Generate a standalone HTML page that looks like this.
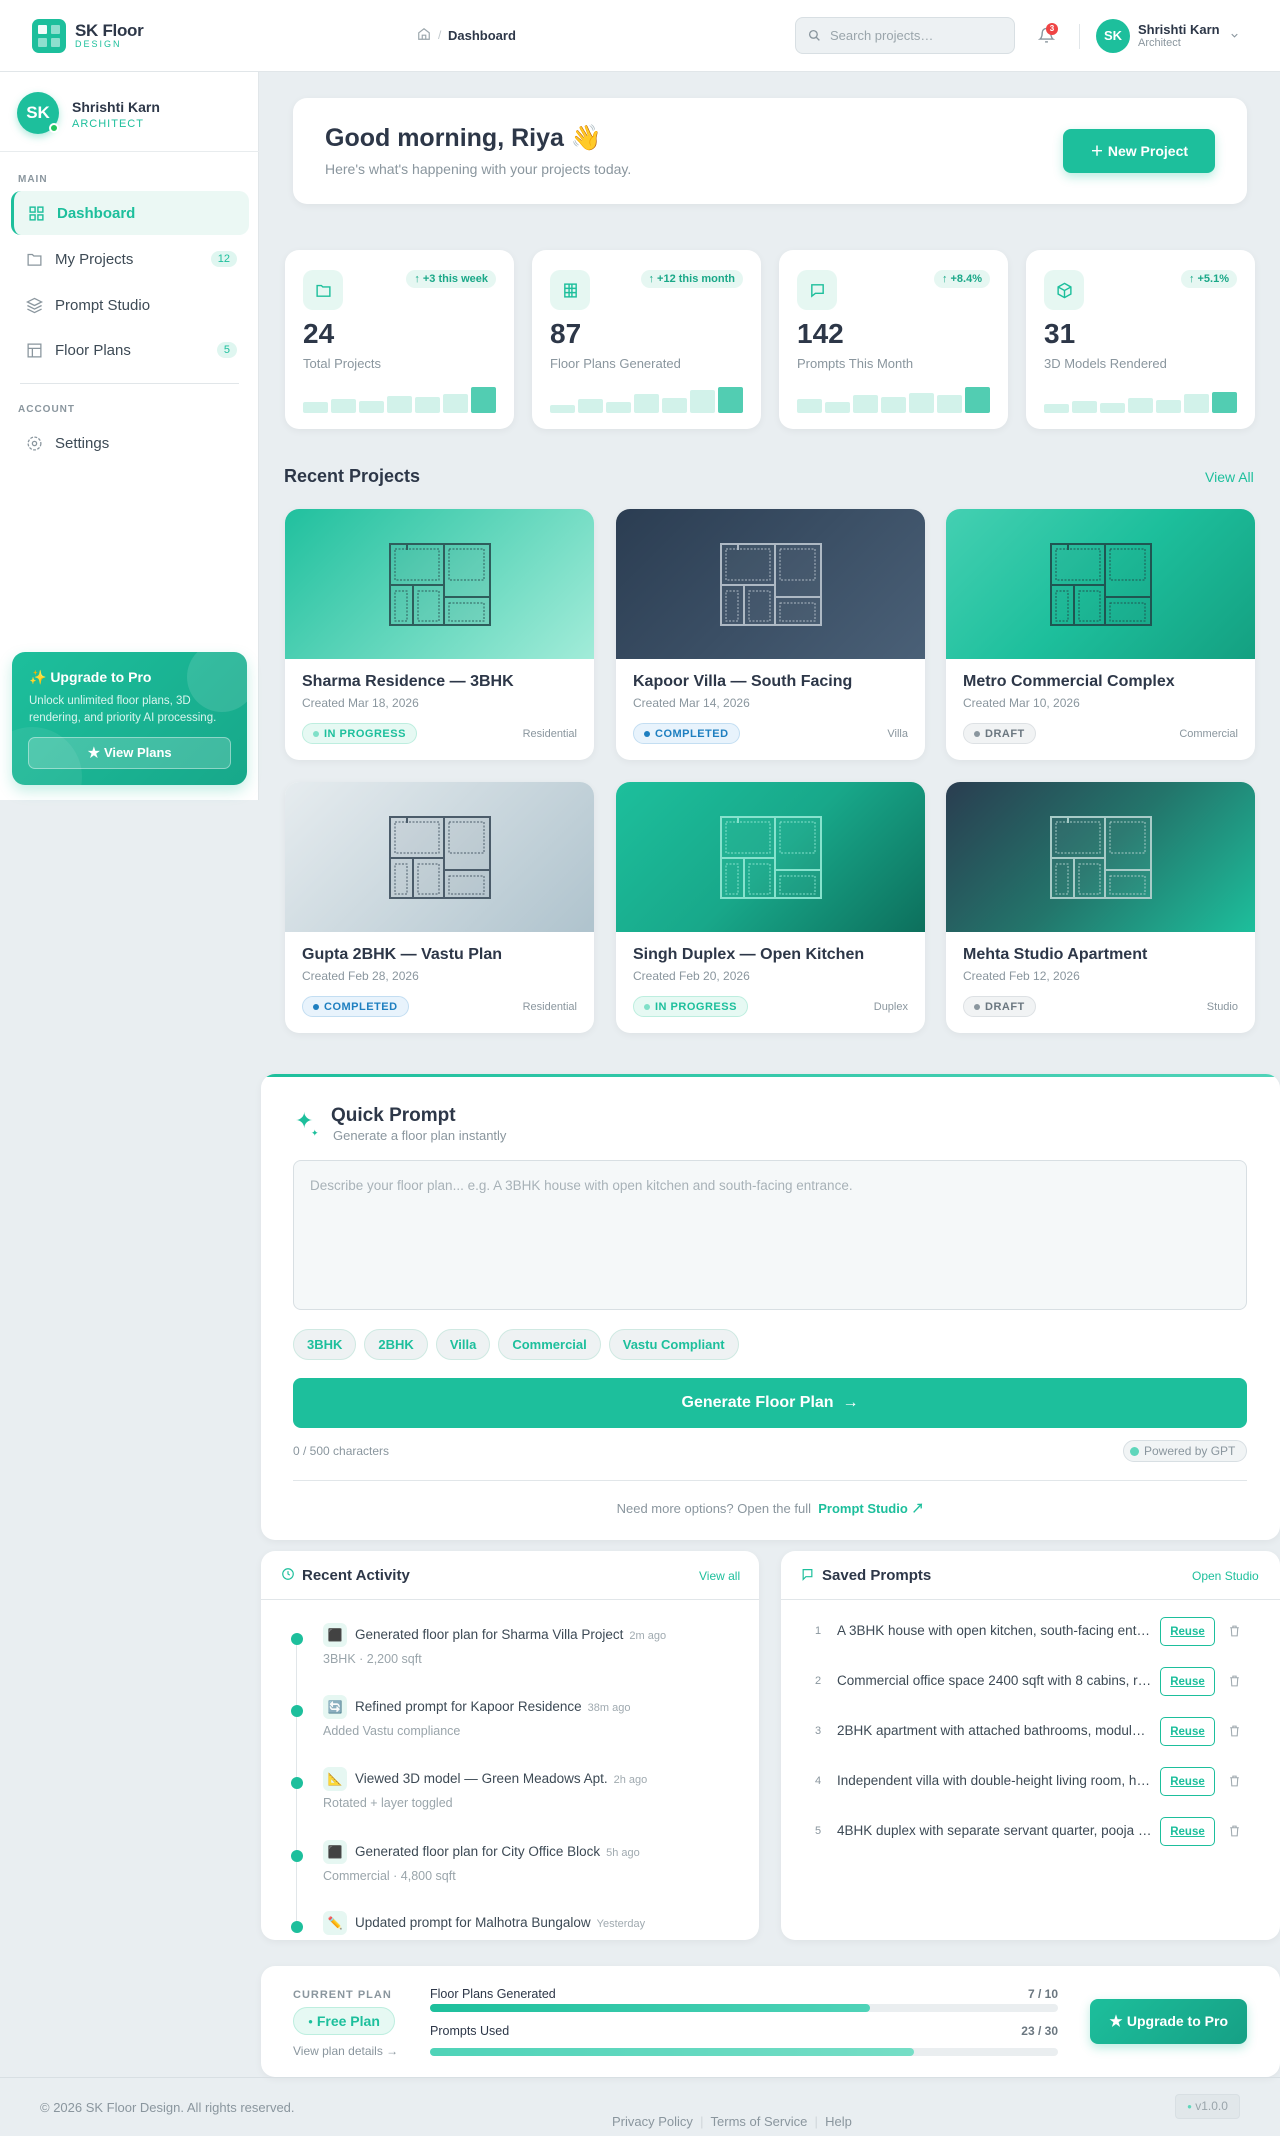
<!DOCTYPE html>
<html><head><meta charset="utf-8"><style>
*{box-sizing:border-box;margin:0;padding:0}
body{width:1280px;height:2136px;background:#e9eef1;font-family:"Liberation Sans","Noto Sans CJK JP",sans-serif;color:#2d3748;position:relative;overflow:hidden}
.a{position:absolute}
.card{position:absolute;background:#fff;border-radius:14px;box-shadow:0 2px 8px rgba(0,0,0,.05)}
.teal{color:#1dbf9c}
.muted{color:#8a969e}
.ni{position:absolute;left:11px;width:238px;height:44px;display:flex;align-items:center;padding-left:15px;font-size:15px;color:#3d4a55;border-radius:10px}
.ni svg{margin-right:12px}
.badge{position:absolute;right:12px;background:#dff6f0;color:#1dbf9c;font-size:11px;border-radius:10px;padding:2px 7px}
.stat{position:absolute;top:250px;width:229px;height:179px;background:#fff;border-radius:14px;box-shadow:0 2px 8px rgba(0,0,0,.05)}
.stat .ic{position:absolute;left:18px;top:20px;width:40px;height:40px;border-radius:10px;background:#e6f7f2;display:flex;align-items:center;justify-content:center}
.stat .tg{position:absolute;right:18px;top:20px;background:#e6f7f2;color:#1aa888;font-size:11px;font-weight:bold;border-radius:10px;padding:3px 8px}
.stat .n{position:absolute;left:18px;top:68px;font-size:28px;font-weight:bold;color:#2d3748}
.stat .l{position:absolute;left:18px;top:106px;font-size:13px;color:#8a969e}
.bars{position:absolute;left:18px;right:18px;bottom:16px;height:26px;display:flex;align-items:flex-end;gap:3px}
.bars i{flex:1;background:#d2f2ea;border-radius:2px}
.bars i:last-child{background:#52cdb2}
.pc{position:absolute;width:309px;height:251px;background:#fff;border-radius:14px;overflow:hidden;box-shadow:0 2px 8px rgba(0,0,0,.05)}
.pc .img{height:150px;display:flex;align-items:center;justify-content:center}
.pc h3{position:absolute;left:17px;top:164px;font-size:16px;font-weight:bold;color:#2d3748}
.pc .d{position:absolute;left:17px;top:187px;font-size:12px;color:#8a969e}
.pc .st{position:absolute;left:17px;top:214px;height:21px;border-radius:11px;font-size:11px;font-weight:bold;padding:0 10px;display:flex;align-items:center;letter-spacing:.5px}
.pc .st b{width:6px;height:6px;border-radius:3px;margin-right:5px;display:inline-block}
.pc .ty{position:absolute;right:17px;top:219px;font-size:11px;color:#8a969e}
.ip{background:#e6f9f3;color:#1dbf9c;border:1px solid #bdeedf}.ip b{background:#7fe0c8}
.cp{background:#e8f3fc;color:#1e7fc0;border:1px solid #c3def2}.cp b{background:#1e7fc0}
.dr{background:#f1f3f4;color:#6b7780;border:1px solid #dde1e4}.dr b{background:#8a969e}
.chip{height:31px;border-radius:16px;background:#eef2f3;border:1px solid #cfe9e2;color:#1dbf9c;font-size:13px;font-weight:bold;padding:0 13px;display:flex;align-items:center}
.act{position:absolute;left:0;width:497px}
.act .dot{position:absolute;left:30px;width:12px;height:12px;border-radius:6px;background:#1dbf9c}
.act .ib{position:absolute;left:62px;width:24px;height:24px;border-radius:6px;background:#e6f7f2;font-size:12px;display:flex;align-items:center;justify-content:center}
.act .t{position:absolute;left:94px;font-size:13.5px;color:#3d4a55;white-space:nowrap}
.act .t span{font-size:11px;color:#a0aab0;margin-left:6px}
.act .s{position:absolute;left:62px;font-size:12.5px;color:#9aa5ab}
.sp{position:absolute;left:0;width:499px;height:30px}
.sp .k{position:absolute;left:34px;top:8px;font-size:11px;color:#8a969e}
.sp .t{position:absolute;left:56px;top:6px;font-size:13.5px;color:#3d4a55;width:315px;white-space:nowrap;overflow:hidden;text-overflow:ellipsis}
.sp .r{position:absolute;left:379px;top:0;width:55px;height:29px;border:1.5px solid #1dbf9c;border-radius:5px;color:#1dbf9c;font-size:11.5px;font-weight:bold;text-decoration:underline;display:flex;align-items:center;justify-content:center}
.sp .x{position:absolute;left:447px;top:7px}
</style></head><body>

<div class="a" style="left:0;top:0;width:1280px;height:72px;background:#fff;border-bottom:1px solid #e1e6e9"></div>
<div class="a" style="left:32px;top:19px;width:34px;height:34px;border-radius:7px;background:#1dbf9c">
<div class="a" style="left:6px;top:6px;width:9px;height:9px;background:#fff;opacity:.95;border-radius:1px"></div>
<div class="a" style="left:19px;top:6px;width:9px;height:9px;background:#fff;opacity:.5;border-radius:1px"></div>
<div class="a" style="left:6px;top:19px;width:9px;height:9px;background:#fff;opacity:.5;border-radius:1px"></div>
<div class="a" style="left:19px;top:19px;width:9px;height:9px;background:#fff;opacity:.5;border-radius:1px"></div></div>
<div class="a" style="left:75px;top:21px;font-size:17px;font-weight:bold;color:#2d3748;letter-spacing:-.3px">SK Floor</div>
<div class="a teal" style="left:75px;top:39px;font-size:9px;letter-spacing:2px">DESIGN</div>
<svg class="a" style="left:417px;top:27px" width="14" height="14" viewBox="0 0 24 24" fill="none" stroke="#9aa5ab" stroke-width="2"><path d="M3 10l9-7 9 7v11H3z"/><path d="M9 21v-7h6v7"/></svg>
<div class="a" style="left:438px;top:28px;font-size:12px;color:#c0c8cc">/</div>
<div class="a" style="left:448px;top:28px;font-size:13px;font-weight:bold;color:#2d3748">Dashboard</div>
<div class="a" style="left:795px;top:17px;width:220px;height:37px;border-radius:8px;background:#edf1f3;border:1px solid #d8dfe3"></div>
<svg class="a" style="left:808px;top:29px" width="13" height="13" viewBox="0 0 24 24" fill="none" stroke="#8a969e" stroke-width="2.5"><circle cx="10" cy="10" r="7"/><path d="M15 15l6 6"/></svg>
<div class="a" style="left:830px;top:28px;font-size:13px;color:#9aa5ab">Search projects…</div>
<svg class="a" style="left:1038px;top:27px" width="17" height="17" viewBox="0 0 24 24" fill="none" stroke="#8a969e" stroke-width="2"><path d="M6 8a6 6 0 0112 0c0 7 3 9 3 9H3s3-2 3-9"/><path d="M10 21h4"/></svg>
<div class="a" style="left:1046px;top:23px;width:12px;height:12px;border-radius:6px;background:#ef4444;color:#fff;font-size:8px;text-align:center;line-height:12px;font-weight:bold">3</div>
<div class="a" style="left:1079px;top:24px;width:1px;height:25px;background:#e1e6e9"></div>
<div class="a" style="left:1096px;top:19px;width:34px;height:34px;border-radius:17px;background:#1dbf9c;color:#fff;font-size:13px;font-weight:bold;text-align:center;line-height:34px">SK</div>
<div class="a" style="left:1138px;top:22px;font-size:13px;font-weight:bold;color:#2d3748">Shrishti Karn</div>
<div class="a" style="left:1138px;top:37px;font-size:11px;color:#8a969e">Architect</div>
<svg class="a" style="left:1229px;top:30px" width="11" height="11" viewBox="0 0 24 24" fill="none" stroke="#8a969e" stroke-width="2.5"><path d="M6 9l6 6 6-6"/></svg>

<div class="a" style="left:0;top:72px;width:259px;height:728px;background:#fff;border-right:1px solid #e1e6e9"></div>
<div class="a" style="left:17px;top:92px;width:42px;height:42px;border-radius:21px;background:#1dbf9c;color:#fff;font-size:17px;font-weight:bold;text-align:center;line-height:42px;box-shadow:0 3px 8px rgba(29,191,156,.35)">SK</div>
<div class="a" style="left:49px;top:123px;width:10px;height:10px;border-radius:5px;background:#22c55e;border:2px solid #fff"></div>
<div class="a" style="left:72px;top:99px;font-size:14px;font-weight:bold;color:#2d3748">Shrishti Karn</div>
<div class="a teal" style="left:72px;top:118px;font-size:11px;letter-spacing:1px">ARCHITECT</div>
<div class="a" style="left:0;top:151px;width:259px;height:1px;background:#e8ecee"></div>
<div class="a" style="left:18px;top:174px;font-size:10px;font-weight:bold;color:#8a969e;letter-spacing:1px">MAIN</div>
<div class="ni" style="top:191px;background:#ebf8f4;color:#1dbf9c;font-weight:bold;border-left:3px solid #1dbf9c;padding-left:14px"><svg width="17" height="17" viewBox="0 0 24 24" fill="none" stroke="#1dbf9c" stroke-width="2"><rect x="3" y="3" width="7" height="7"/><rect x="14" y="3" width="7" height="7"/><rect x="3" y="14" width="7" height="7"/><rect x="14" y="14" width="7" height="7"/></svg>Dashboard</div>
<div class="ni" style="top:237px"><svg width="17" height="17" viewBox="0 0 24 24" fill="none" stroke="#8a969e" stroke-width="1.8"><path d="M3 5h6l2 2h10v13H3z"/></svg>My Projects<span class="badge">12</span></div>
<div class="ni" style="top:283px"><svg width="17" height="17" viewBox="0 0 24 24" fill="none" stroke="#8a969e" stroke-width="1.8"><path d="M12 2l10 5-10 5L2 7z"/><path d="M2 12l10 5 10-5"/><path d="M2 17l10 5 10-5"/></svg>Prompt Studio</div>
<div class="ni" style="top:328px"><svg width="17" height="17" viewBox="0 0 24 24" fill="none" stroke="#8a969e" stroke-width="1.8"><rect x="3" y="3" width="18" height="18"/><path d="M3 9h18M9 9v12"/></svg>Floor Plans<span class="badge">5</span></div>
<div class="a" style="left:20px;top:383px;width:219px;height:1px;background:#e1e6e9"></div>
<div class="a" style="left:18px;top:404px;font-size:10px;font-weight:bold;color:#8a969e;letter-spacing:1px">ACCOUNT</div>
<div class="ni" style="top:421px"><svg width="17" height="17" viewBox="0 0 24 24" fill="none" stroke="#8a969e" stroke-width="1.8"><circle cx="12" cy="12" r="3"/><circle cx="12" cy="12" r="9" stroke-dasharray="4 2"/></svg>Settings</div>
<div class="a" style="left:12px;top:652px;width:235px;height:133px;border-radius:13px;background:linear-gradient(135deg,#1dbf9c,#17a88a);overflow:hidden;box-shadow:0 6px 14px rgba(29,191,156,.25)">
<div class="a" style="left:175px;top:-10px;width:70px;height:70px;border-radius:35px;background:rgba(255,255,255,.12)"></div>
<div class="a" style="left:-30px;top:75px;width:100px;height:100px;border-radius:50px;background:rgba(255,255,255,.07)"></div>
<div class="a" style="left:17px;top:17px;font-size:14px;font-weight:bold;color:#fff">✨ Upgrade to Pro</div>
<div class="a" style="left:17px;top:41px;width:210px;font-size:11.5px;line-height:17px;color:#d8f5ee">Unlock unlimited floor plans, 3D rendering, and priority AI processing.</div>
<div class="a" style="left:16px;top:85px;width:203px;height:32px;border-radius:7px;border:1px solid rgba(255,255,255,.4);background:rgba(255,255,255,.18);color:#fff;font-size:13px;font-weight:bold;text-align:center;line-height:30px">★ View Plans</div></div>

<div class="card" style="left:293px;top:98px;width:954px;height:106px;overflow:hidden">
<div class="a" style="left:32px;top:26px;font-size:25px;font-weight:bold;color:#2d3748">Good morning, Riya 👋</div>
<div class="a" style="left:32px;top:63px;font-size:14px;color:#8a969e">Here's what's happening with your projects today.</div>
<div class="a" style="left:770px;top:31px;width:152px;height:44px;border-radius:8px;background:#1dbf9c;color:#fff;font-size:14px;font-weight:bold;text-align:center;line-height:44px;box-shadow:0 4px 10px rgba(29,191,156,.3)">＋ New Project</div></div>

<div class="stat" style="left:285px"><div class="ic"><svg width="17" height="17" viewBox="0 0 24 24" fill="none" stroke="#1dbf9c" stroke-width="2"><path d="M3 5h6l2 2h10v13H3z"/></svg></div><div class="tg">↑ +3 this week</div><div class="n">24</div><div class="l">Total Projects</div><div class="bars"><i style="height:42%"></i><i style="height:55%"></i><i style="height:48%"></i><i style="height:66%"></i><i style="height:62%"></i><i style="height:75%"></i><i style="height:100%"></i></div></div>
<div class="stat" style="left:532px"><div class="ic"><svg width="17" height="17" viewBox="0 0 24 24" fill="none" stroke="#1dbf9c" stroke-width="2"><rect x="4" y="3" width="16" height="18"/><path d="M4 9h16M4 15h16M10 3v18M14 3v18"/></svg></div><div class="tg">↑ +12 this month</div><div class="n">87</div><div class="l">Floor Plans Generated</div><div class="bars"><i style="height:30%"></i><i style="height:55%"></i><i style="height:42%"></i><i style="height:75%"></i><i style="height:58%"></i><i style="height:88%"></i><i style="height:100%"></i></div></div>
<div class="stat" style="left:779px"><div class="ic"><svg width="17" height="17" viewBox="0 0 24 24" fill="none" stroke="#1dbf9c" stroke-width="2"><path d="M4 4h16v12H9l-5 4z"/></svg></div><div class="tg">↑ +8.4%</div><div class="n">142</div><div class="l">Prompts This Month</div><div class="bars"><i style="height:55%"></i><i style="height:42%"></i><i style="height:68%"></i><i style="height:60%"></i><i style="height:78%"></i><i style="height:70%"></i><i style="height:100%"></i></div></div>
<div class="stat" style="left:1026px"><div class="ic"><svg width="17" height="17" viewBox="0 0 24 24" fill="none" stroke="#1dbf9c" stroke-width="2"><path d="M12 2l9 5v10l-9 5-9-5V7z"/><path d="M3 7l9 5 9-5M12 12v10"/></svg></div><div class="tg">↑ +5.1%</div><div class="n">31</div><div class="l">3D Models Rendered</div><div class="bars"><i style="height:35%"></i><i style="height:45%"></i><i style="height:40%"></i><i style="height:58%"></i><i style="height:50%"></i><i style="height:72%"></i><i style="height:82%"></i></div></div>

<div class="a" style="left:284px;top:466px;font-size:18px;font-weight:bold;color:#2d3748">Recent Projects</div>
<div class="a teal" style="left:1205px;top:469px;font-size:14px">View All</div>

<svg width="0" height="0" style="position:absolute"><defs><g id="fp"><rect x="1" y="1" width="100" height="81" fill="currentColor" fill-opacity=".08"/><rect x="1" y="1" width="100" height="81"/><path d="M55 1v81M1 42h54M55 54h46M24 42v40"/><path d="M18 1v6"/><g stroke-dasharray="2 1.5" stroke-width="1"><rect x="6" y="6" width="44" height="31"/><rect x="60" y="6" width="35" height="31"/><rect x="6" y="48" width="12" height="30"/><rect x="29" y="48" width="21" height="30"/><rect x="60" y="60" width="35" height="18"/></g></g></defs></svg>

<div class="pc" style="left:285px;top:509px"><div class="img" style="background:linear-gradient(135deg,#20c09e,#a2ecd9)"><svg width="104" height="85" viewBox="-1 -1 104 85" fill="none" stroke="#2e5e5c" stroke-width="2" style="color:#2e5e5c"><use href="#fp"/></svg></div><h3>Sharma Residence — 3BHK</h3><div class="d">Created Mar 18, 2026</div><div class="st ip"><b></b>IN PROGRESS</div><div class="ty">Residential</div></div>
<div class="pc" style="left:616px;top:509px"><div class="img" style="background:linear-gradient(135deg,#2b3d52,#4a6077)"><svg width="104" height="85" viewBox="-1 -1 104 85" fill="none" stroke="#aeb9c4" stroke-width="2" style="color:#aeb9c4"><use href="#fp"/></svg></div><h3>Kapoor Villa — South Facing</h3><div class="d">Created Mar 14, 2026</div><div class="st cp"><b></b>COMPLETED</div><div class="ty">Villa</div></div>
<div class="pc" style="left:946px;top:509px"><div class="img" style="background:linear-gradient(135deg,#44d0b2,#1dbf9c 50%,#14a081)"><svg width="104" height="85" viewBox="-1 -1 104 85" fill="none" stroke="#1f5652" stroke-width="2" style="color:#1f5652"><use href="#fp"/></svg></div><h3>Metro Commercial Complex</h3><div class="d">Created Mar 10, 2026</div><div class="st dr"><b></b>DRAFT</div><div class="ty">Commercial</div></div>
<div class="pc" style="left:285px;top:782px"><div class="img" style="background:linear-gradient(135deg,#e6ecef,#afc3cd)"><svg width="104" height="85" viewBox="-1 -1 104 85" fill="none" stroke="#4b5c6a" stroke-width="2" style="color:#4b5c6a"><use href="#fp"/></svg></div><h3>Gupta 2BHK — Vastu Plan</h3><div class="d">Created Feb 28, 2026</div><div class="st cp"><b></b>COMPLETED</div><div class="ty">Residential</div></div>
<div class="pc" style="left:616px;top:782px"><div class="img" style="background:linear-gradient(135deg,#1dbf9c,#18a88a 50%,#0d6f5c)"><svg width="104" height="85" viewBox="-1 -1 104 85" fill="none" stroke="#86e2cd" stroke-width="2" style="color:#86e2cd"><use href="#fp"/></svg></div><h3>Singh Duplex — Open Kitchen</h3><div class="d">Created Feb 20, 2026</div><div class="st ip"><b></b>IN PROGRESS</div><div class="ty">Duplex</div></div>
<div class="pc" style="left:946px;top:782px"><div class="img" style="background:linear-gradient(135deg,#2a3d50,#23756b 50%,#1dbf9c)"><svg width="104" height="85" viewBox="-1 -1 104 85" fill="none" stroke="#a7cbc7" stroke-width="2" style="color:#a7cbc7"><use href="#fp"/></svg></div><h3>Mehta Studio Apartment</h3><div class="d">Created Feb 12, 2026</div><div class="st dr"><b></b>DRAFT</div><div class="ty">Studio</div></div>

<div class="card" style="left:261px;top:1074px;width:1019px;height:466px;overflow:hidden">
<div class="a" style="left:0;top:0;width:100%;height:3px;background:linear-gradient(90deg,#1dbf9c,#4fd3b8)"></div>
<div class="a teal" style="left:34px;top:36px;font-size:22px;line-height:22px">✦</div>
<div class="a teal" style="left:50px;top:54px;font-size:9px">✦</div>
<div class="a" style="left:70px;top:31px;font-size:19px;font-weight:bold;color:#2d3748">Quick Prompt</div>
<div class="a" style="left:72px;top:54px;font-size:13px;color:#8a969e">Generate a floor plan instantly</div>
<div class="a" style="left:32px;top:86px;width:954px;height:150px;border:1px solid #d8dfe3;border-radius:8px;background:#f5f8f9"></div>
<div class="a" style="left:49px;top:104px;font-size:13.5px;color:#a8b2b8">Describe your floor plan... e.g. A 3BHK house with open kitchen and south-facing entrance.</div>
<div class="a" style="left:32px;top:255px;display:flex;gap:8px"><div class="chip">3BHK</div><div class="chip">2BHK</div><div class="chip">Villa</div><div class="chip">Commercial</div><div class="chip">Vastu Compliant</div></div>
<div class="a" style="left:32px;top:304px;width:954px;height:50px;border-radius:8px;background:#1dbf9c;color:#fff;font-size:16px;font-weight:bold;text-align:center;line-height:50px">Generate Floor Plan &nbsp;→</div>
<div class="a" style="left:32px;top:370px;font-size:12px;color:#8a969e">0 / 500 characters</div>
<div class="a" style="left:862px;top:366px;width:124px;height:22px;border-radius:11px;border:1px solid #d8dfe3;background:#f1f4f5;font-size:12px;color:#8a969e;line-height:20px;padding-left:20px">Powered by GPT</div>
<div class="a" style="left:869px;top:373px;width:9px;height:9px;border-radius:5px;background:#5fd6bb"></div>
<div class="a" style="left:32px;top:406px;width:954px;height:1px;background:#e1e6e9"></div>
<div class="a" style="left:0;width:100%;top:424px;text-align:center;font-size:13px;color:#8a969e">Need more options? Open the full &nbsp;<b class="teal">Prompt Studio ↗</b></div></div>

<div class="card" style="left:261px;top:1551px;width:498px;height:389px;overflow:hidden">
<div class="a" style="left:0;top:48px;width:100%;height:1px;background:#e1e6e9"></div>
<svg class="a" style="left:20px;top:16px" width="14" height="14" viewBox="0 0 24 24" fill="none" stroke="#1dbf9c" stroke-width="2"><circle cx="12" cy="12" r="9"/><path d="M12 7v5l3 2"/></svg>
<div class="a" style="left:41px;top:16px;font-size:15px;font-weight:bold;color:#2d3748">Recent Activity</div>
<div class="a teal" style="left:438px;top:18px;font-size:12px">View all</div>
<div class="a" style="left:35px;top:90px;width:1px;height:290px;background:#e1e6e9"></div>
<div class="act" style="top:72px"><div class="dot" style="top:10px"></div><div class="ib">⬛</div><div class="t" style="top:4px">Generated floor plan for Sharma Villa Project<span>2m ago</span></div><div class="s" style="top:29px">3BHK · 2,200 sqft</div></div>
<div class="act" style="top:144px"><div class="dot" style="top:10px"></div><div class="ib">🔄</div><div class="t" style="top:4px">Refined prompt for Kapoor Residence<span>38m ago</span></div><div class="s" style="top:29px">Added Vastu compliance</div></div>
<div class="act" style="top:216px"><div class="dot" style="top:10px"></div><div class="ib">📐</div><div class="t" style="top:4px">Viewed 3D model — Green Meadows Apt.<span>2h ago</span></div><div class="s" style="top:29px">Rotated + layer toggled</div></div>
<div class="act" style="top:289px"><div class="dot" style="top:10px"></div><div class="ib">⬛</div><div class="t" style="top:4px">Generated floor plan for City Office Block<span>5h ago</span></div><div class="s" style="top:29px">Commercial · 4,800 sqft</div></div>
<div class="act" style="top:360px"><div class="dot" style="top:10px"></div><div class="ib">✏️</div><div class="t" style="top:4px">Updated prompt for Malhotra Bungalow<span>Yesterday</span></div><div class="s" style="top:29px">Switched to west-facing entry</div></div></div>

<div class="card" style="left:781px;top:1551px;width:499px;height:389px;overflow:hidden">
<div class="a" style="left:0;top:48px;width:100%;height:1px;background:#e1e6e9"></div>
<svg class="a" style="left:20px;top:17px" width="13" height="13" viewBox="0 0 24 24" fill="none" stroke="#1dbf9c" stroke-width="2.2"><path d="M4 3h16v13H9l-5 5z"/></svg>
<div class="a" style="left:41px;top:16px;font-size:15px;font-weight:bold;color:#2d3748">Saved Prompts</div>
<div class="a teal" style="left:411px;top:18px;font-size:12px">Open Studio</div>
<div class="sp" style="top:66px"><div class="k">1</div><div class="t">A 3BHK house with open kitchen, south-facing entrance and balcony</div><div class="r">Reuse</div><svg class="x" width="13" height="14" viewBox="0 0 24 24" fill="none" stroke="#a0aab0" stroke-width="2"><path d="M4 6h16M9 6V3h6v3M6 6l1 15h10l1-15"/></svg></div>
<div class="sp" style="top:116px"><div class="k">2</div><div class="t">Commercial office space 2400 sqft with 8 cabins, reception area</div><div class="r">Reuse</div><svg class="x" width="13" height="14" viewBox="0 0 24 24" fill="none" stroke="#a0aab0" stroke-width="2"><path d="M4 6h16M9 6V3h6v3M6 6l1 15h10l1-15"/></svg></div>
<div class="sp" style="top:166px"><div class="k">3</div><div class="t">2BHK apartment with attached bathrooms, modular kitchen</div><div class="r">Reuse</div><svg class="x" width="13" height="14" viewBox="0 0 24 24" fill="none" stroke="#a0aab0" stroke-width="2"><path d="M4 6h16M9 6V3h6v3M6 6l1 15h10l1-15"/></svg></div>
<div class="sp" style="top:216px"><div class="k">4</div><div class="t">Independent villa with double-height living room, home theater</div><div class="r">Reuse</div><svg class="x" width="13" height="14" viewBox="0 0 24 24" fill="none" stroke="#a0aab0" stroke-width="2"><path d="M4 6h16M9 6V3h6v3M6 6l1 15h10l1-15"/></svg></div>
<div class="sp" style="top:266px"><div class="k">5</div><div class="t">4BHK duplex with separate servant quarter, pooja room</div><div class="r">Reuse</div><svg class="x" width="13" height="14" viewBox="0 0 24 24" fill="none" stroke="#a0aab0" stroke-width="2"><path d="M4 6h16M9 6V3h6v3M6 6l1 15h10l1-15"/></svg></div></div>

<div class="card" style="left:261px;top:1966px;width:1019px;height:111px">
<div class="a" style="left:32px;top:23px;font-size:11px;font-weight:bold;color:#8a969e;letter-spacing:1px">CURRENT PLAN</div>
<div class="a" style="left:32px;top:41px;width:102px;height:28px;border-radius:14px;background:#e6f9f3;border:1px solid #bdeedf;color:#1dbf9c;font-size:14px;font-weight:bold;text-align:center;line-height:26px"><span style="font-size:8px;vertical-align:2px">●</span> Free Plan</div>
<div class="a" style="left:32px;top:78px;font-size:12px;color:#8a969e">View plan details →</div>
<div class="a" style="left:169px;top:21px;font-size:12.5px;color:#2d3748">Floor Plans Generated</div>
<div class="a" style="left:747px;top:21px;font-size:12px;font-weight:bold;color:#6b7780;width:50px;text-align:right">7 / 10</div>
<div class="a" style="left:169px;top:38px;width:628px;height:8px;border-radius:4px;background:#eaeef0"><div style="width:70%;height:100%;border-radius:4px;background:linear-gradient(90deg,#1dbf9c,#4fd3b8)"></div></div>
<div class="a" style="left:169px;top:58px;font-size:12.5px;color:#2d3748">Prompts Used</div>
<div class="a" style="left:747px;top:58px;font-size:12px;font-weight:bold;color:#6b7780;width:50px;text-align:right">23 / 30</div>
<div class="a" style="left:169px;top:82px;width:628px;height:8px;border-radius:4px;background:#eaeef0"><div style="width:77%;height:100%;border-radius:4px;background:linear-gradient(90deg,#4fd3b8,#76dec6)"></div></div>
<div class="a" style="left:829px;top:33px;width:157px;height:45px;border-radius:8px;background:linear-gradient(135deg,#1dbf9c,#16a085);color:#fff;font-size:14px;font-weight:bold;text-align:center;line-height:45px;box-shadow:0 4px 10px rgba(29,191,156,.3)">★ Upgrade to Pro</div></div>

<div class="a" style="left:0;top:2077px;width:1280px;height:1px;background:#d8dfe3"></div>
<div class="a" style="left:40px;top:2100px;font-size:13px;color:#8a969e">© 2026 SK Floor Design. All rights reserved.</div>
<div class="a" style="left:612px;top:2114px;font-size:13px;color:#8a969e">Privacy Policy &nbsp;<span style="color:#d0d6da">|</span>&nbsp; Terms of Service &nbsp;<span style="color:#d0d6da">|</span>&nbsp; Help</div>
<div class="a" style="left:1175px;top:2094px;width:65px;height:25px;border-radius:4px;background:#e1e7ea;border:1px solid #d8dfe3;font-size:12px;color:#9aa5ab;line-height:23px;text-align:center"><span style="color:#5fd6bb;font-size:8px;vertical-align:1px">●</span> v1.0.0</div>
</body></html>
